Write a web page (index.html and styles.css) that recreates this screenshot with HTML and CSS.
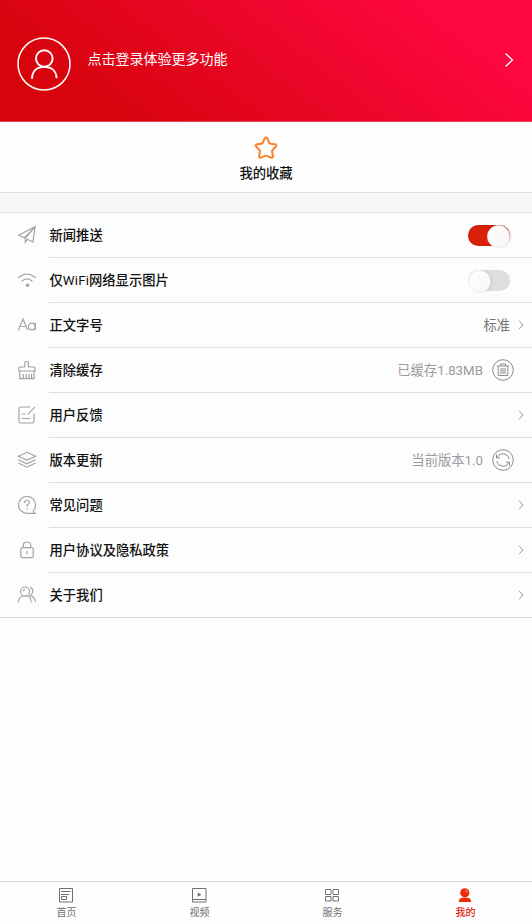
FILE: index.html
```html
<!DOCTYPE html>
<html lang="zh-CN">
<head>
<meta charset="utf-8">
<title>我的</title>
<link rel="stylesheet" href="styles.css">
</head>
<body>
<div class="app">
  <header class="profile">
    <svg class="avatar" viewBox="0 0 54 54"><circle cx="27" cy="27" r="26"/><circle cx="27.3" cy="21.5" r="8.3" stroke-width="1.9"/><path d="M15 41.8C15 34 20 29.9 27.3 29.9S39.3 34 39.6 41.2" stroke-width="1.9"/></svg>
    <span class="login">点击登录体验更多功能</span>
    <svg class="go" viewBox="0 0 10 16"><path d="M1.5 1.5 8.5 8 1.5 14.5"/></svg>
  </header>
  <section class="favorites">
    <svg class="star" viewBox="0 0 24 24"><path d="M10.7 2.3Q12 .2 13.3 2.3L15.2 6.8Q15.6 7.6 16.5 7.7L21 8.3Q23.2 8.8 21.8 10.6L18.6 14Q18 14.6 18.1 15.5L18.9 20.1Q18.9 22.4 16.9 21.6L13 19.8Q12 19.3 11 19.8L7.1 21.6Q5.1 22.4 5.1 20.1L5.9 15.5Q6 14.6 5.4 14L2.2 10.6Q.8 8.8 3 8.3L7.5 7.7Q8.4 7.6 8.8 6.8Z"/></svg>
    <span>我的收藏</span>
  </section>
  <div class="spacer"></div>
  <main class="settings">
    <div class="row">
      <svg class="icon" viewBox="0 0 20 20"><path d="M18.2 1.5 1.8 10.2 7.5 12.7 18 1.8 16 17 10.3 14.3 8.3 17.3V13L18 1.8"/></svg>
      <div class="cell"><span class="label">新闻推送</span><span class="switch on"></span></div>
    </div>
    <div class="row">
      <svg class="icon" viewBox="0 0 20 20"><path d="M1.2 7.8Q10 .2 18.8 7.8M4.6 11.3Q10 6.6 15.4 11.3"/><circle class="solid" cx="10.6" cy="15.3" r="1.8"/></svg>
      <div class="cell"><span class="label">仅<span class="latin">WiFi</span>网络显示图片</span><span class="switch"></span></div>
    </div>
    <div class="row">
      <svg class="icon" viewBox="0 0 20 20"><path d="M1.3 15.3 6 4 10.7 15.3M3 11.5H9M18.3 7.8V15.3"/><circle cx="14.9" cy="11.5" r="3.4"/></svg>
      <div class="cell"><span class="label">正文字号</span><span class="value dark">标准</span><svg class="chevron" viewBox="0 0 6 10"><path d="M1 .8 5 5 1 9.2"/></svg></div>
    </div>
    <div class="row">
      <svg class="icon" viewBox="0 0 20 20"><path d="M7.8 7V2.8Q7.8 1.5 9.6 1.5T11.4 2.8V7H17Q18 7 18 8V11H1.8V8Q1.8 7 2.8 7H7.8M2.8 11V18.6H17V11M6.3 18V14M9.3 18V14M12 18V14M14.6 18V14"/></svg>
      <div class="cell"><span class="label">清除缓存</span><span class="value">已缓存1.83MB</span><svg class="action" viewBox="0 0 22 22"><circle cx="11" cy="11" r="10.3"/><path d="M5 7H17M8.5 7V5H13.5V7M6.2 7.2V16.5H15.8V7.2M9 9V15M11 9V15M13 9V15"/></svg></div>
    </div>
    <div class="row">
      <svg class="icon" viewBox="0 0 20 20"><path d="M13 2H3.5Q2 2 2 3.5V16.5Q2 18 3.5 18H15.5Q17 18 17 16.5V8.5M18 1.8 10.8 9.3M4.5 9H9M4.5 13.5H13"/></svg>
      <div class="cell"><span class="label">用户反馈</span><svg class="chevron" viewBox="0 0 6 10"><path d="M1 .8 5 5 1 9.2"/></svg></div>
    </div>
    <div class="row">
      <svg class="icon" viewBox="0 0 20 20"><path d="M10 2.3 18.6 6.2 10 10.1 1.4 6.2ZM1.4 9.7 10 13.8 18.6 9.7M1.4 13 10 17.2 18.6 13"/></svg>
      <div class="cell"><span class="label">版本更新</span><span class="value">当前版本1.0</span><svg class="action" viewBox="0 0 22 22"><circle cx="11" cy="11" r="10.3"/><path d="M5.2 8.5A6.5 6.5 0 0 1 17.4 10M4.5 5.3V9H8.2M16.8 13.5A6.5 6.5 0 0 1 4.6 12M17.5 16.7V13H13.8"/></svg></div>
    </div>
    <div class="row">
      <svg class="icon" viewBox="0 0 20 20"><path d="M16.2 16Q18.5 13.5 18.5 10A8.5 8.5 0 1 0 10 18.3H17.7Q16.3 17.5 16.2 16M7.5 8Q7.5 5.5 10 5.5T12.5 7.5Q12.5 8.8 10 10.1V11.5M10 13V14.4"/></svg>
      <div class="cell"><span class="label">常见问题</span><svg class="chevron" viewBox="0 0 6 10"><path d="M1 .8 5 5 1 9.2"/></svg></div>
    </div>
    <div class="row">
      <svg class="icon" viewBox="0 0 20 20"><rect x="3.8" y="7.7" width="12.4" height="10" rx="1.5"/><path d="M6.3 7.7V5.2Q6.3 2 10 2T13.7 5.2V7.7M10 11V14"/></svg>
      <div class="cell"><span class="label">用户协议及隐私政策</span><svg class="chevron" viewBox="0 0 6 10"><path d="M1 .8 5 5 1 9.2"/></svg></div>
    </div>
    <div class="row">
      <svg class="icon" viewBox="0 0 20 20"><circle cx="8" cy="6.5" r="4.5"/><path d="M1.4 17.5Q1.4 11 8 11T14.2 17.5M13 2.3Q16 3.3 15.8 6.5 15.5 9.3 13 10.7 18.3 11.5 18.5 17M6.2 6.2Q6.5 4.5 8 4.4"/></svg>
      <div class="cell"><span class="label">关于我们</span><svg class="chevron" viewBox="0 0 6 10"><path d="M1 .8 5 5 1 9.2"/></svg></div>
    </div>
  </main>
  <nav class="tabs">
    <div class="tab"><svg viewBox="0 0 16 16"><path d="M1.5 1.5H14.5V15H1.5ZM3 4.5H12.5M3 7.5H11M3.5 9.5H8.5V12.5H3.5Z"/></svg><span>首页</span></div>
    <div class="tab"><svg viewBox="0 0 16 16"><path d="M1.5 1.5H15V15H1.5ZM1 12.5H15"/><path class="fill" d="M6.7 5.5 10.5 7.7 6.7 9.8Z"/></svg><span>视频</span></div>
    <div class="tab"><svg viewBox="0 0 16 16"><path d="M1.5 2.5H7V7.5H1.5ZM9 2.5H14.5V7.5H9ZM1.5 9.5H7V14H1.5ZM9 9.5H14.5V14H9Z"/></svg><span>服务</span></div>
    <div class="tab active"><svg viewBox="0 0 16 16"><circle class="fill" cx="7.8" cy="5.8" r="4.6"/><path class="fill" d="M5 10.7H11Q14 11.3 14.3 15H1.7Q2 11.3 5 10.7Z"/><path class="shine" d="M8.2 2.6Q10.9 3 11 6L8.5 5Z"/></svg><span>我的</span></div>
  </nav>
</div>
</body>
</html>
```
FILE: styles.css
```css
* { box-sizing: border-box; }
body {
  margin: 0;
  background: #fefefe;
  color: #111;
  font-family: Roboto, "Noto Sans CJK SC", sans-serif;
}
svg { display: block; flex: none; fill: none; stroke: currentColor; }
.app { display: flex; flex-direction: column; width: 100%; height: 924px; }
.profile {
  display: flex;
  flex: none;
  height: 122px;
  padding: 37px 17px 0;
  color: #fff;
  background: linear-gradient(38deg, #d7040c 16%, #ff0743 88%);
  border-bottom: 1px solid #ee4059;
}
.avatar { width: 54px; height: 54px; stroke-width: 1.5; }
.login { margin-left: 16.5px; padding-top: 12px; font-size: 14px; line-height: 20px; }
.go { width: 10px; height: 16px; margin: 15px 1px 0 auto; stroke-width: 1.3; }
.favorites {
  display: flex;
  flex: none;
  flex-direction: column;
  align-items: center;
  height: 70px;
  padding-top: 14px;
  font-size: 13.3px;
  font-weight: 500;
  line-height: 20px;
}
.star { width: 24px; height: 24px; margin-bottom: 4px; color: #fa8029; stroke-width: 2; }
.spacer {
  flex: none;
  height: 21px;
  background: #f7f7f7;
  border: solid #e0e0e0;
  border-width: 1px 0;
}
.settings { flex: none; background: #fdfdfd; border-bottom: 1px solid #dcdcdc; }
.row { display: flex; align-items: center; height: 45px; padding-left: 17px; }
.row:last-child { height: 44px; }
.icon { width: 20px; height: 20px; color: #a4a4a4; stroke-width: 1.2; margin: 0 12px 1px 0; }
.icon .solid { fill: currentColor; stroke: none; }
.cell {
  display: flex;
  flex: 1;
  align-items: center;
  height: 100%;
  padding: 0 8px 0 .5px;
  border-bottom: 1px solid #dedede;
  font-size: 13.3px;
}
.row:last-child .cell { border-bottom: 0; }
.label { margin-right: auto; padding-top: 2px; font-weight: 500; line-height: 20px; }
.latin { font-weight: 400; letter-spacing: .15px; }
.value { padding-top: 2px; color: #9a9a9f; line-height: 20px; }
.value.dark { color: #777; }
.chevron { width: 6px; height: 10px; margin-left: 8px; color: #999; stroke-width: 1; }
.action { width: 22px; height: 22px; margin: 0 10px 0 9px; color: #8c8c8c; stroke-width: 1; }
.switch {
  width: 42px;
  height: 21px;
  margin: 0 14px 0 0;
  border-radius: 11px;
  background: #dedede;
}
.switch::before {
  content: "";
  display: block;
  width: 21px;
  height: 21px;
  border-radius: 50%;
  background: linear-gradient(135deg, #fff, #f5f5f5);
  border: 1px solid #eee;
  box-shadow: 1px 0 1px #0002;
}
.switch.on { background: #d92009; box-shadow: inset 1px 1px 2px #8a1a1044; }
.switch.on::before { margin-left: auto; }
.tabs {
  display: flex;
  flex: none;
  height: 43px;
  margin-top: auto;
  background: #fefefe;
  border-top: 1px solid #dcdcdc;
}
.tab {
  display: flex;
  flex: 1;
  flex-direction: column;
  align-items: center;
  padding-top: 5px;
  color: #707070;
  font-size: 10px;
  line-height: 14px;
}
.tab svg { width: 16px; height: 16px; margin: 0 1px 3px 0; stroke-width: 1; }
.tab .fill { fill: currentColor; stroke: none; }
.tab .shine { fill: #fff; fill-opacity: .35; stroke: none; }
.tab.active { color: #ee2b0a; }
.tab.active span { color: #dc2410; font-weight: 500; }
```
